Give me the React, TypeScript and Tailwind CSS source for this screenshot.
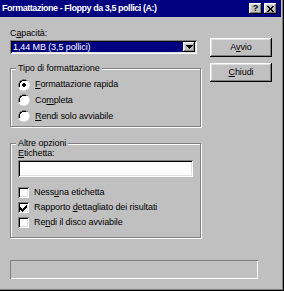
import React from "react";

const raised =
  "shadow-[inset_-1px_-1px_0_#000,inset_1px_1px_0_#fff,inset_-2px_-2px_0_#808080,inset_2px_2px_0_#dfdfdf]";
const sunken =
  "shadow-[inset_1px_1px_0_#808080,inset_-1px_-1px_0_#fff,inset_2px_2px_0_#000,inset_-2px_-2px_0_#dfdfdf]";
const etched = "border border-[#808080] shadow-[inset_1px_1px_0_#fff,1px_1px_0_#fff]";

function U({ children }: { children: React.ReactNode }) {
  return <span className="underline underline-offset-[1px]">{children}</span>;
}

function Radio({ checked }: { checked?: boolean }) {
  return (
    <svg width="12" height="12" viewBox="0 0 12 12" className="shrink-0">
      <path d="M4 0h4v1h2v1h1v2h1v4h-1v2h-1v1h-2v1h-4v-1h-2v-1h-1v-2h-1v-4h1v-2h1v-1h2z" fill="#fff" />
      <path d="M4 0h4v1h2v1h-2v-1h-4v1h-2v2h-1v4h-1v-4h1v-2h1v-1h2z" fill="#808080" />
      <path d="M4 1h4v1h-4v1h-1v1h-1v4h-1v-4h1v-2h2z" fill="#000" />
      <path d="M10 2h1v2h1v4h-1v2h-1v1h-2v1h-4v-1h4v-1h2v-2h1v-4h-1z" fill="#dfdfdf" />
      {checked && <path d="M5 4h2v1h1v2h-1v1h-2v-1h-1v-2h1z" fill="#000" />}
    </svg>
  );
}

function Check({ checked }: { checked?: boolean }) {
  return (
    <div className={`w-[11px] h-[11px] bg-white shrink-0 relative ${sunken}`}>
      {checked && (
        <svg width="11" height="11" viewBox="0 0 11 11" className="absolute left-0 top-0">
          <path d="M2 5h1v1h1v1h1v-1h1v-1h1v-1h1v-1h1v3h-1v1h-1v1h-1v1h-1v1h-1v-1h-1v-1h-1v-1h-1z" fill="#000" />
        </svg>
      )}
    </div>
  );
}

function Row({ control, children }: { control: React.ReactNode; children: React.ReactNode }) {
  return (
    <div className="flex items-center gap-[5px] h-[15px]">
      {control}
      <span>{children}</span>
    </div>
  );
}

function Group({ title, className, children }: { title: string; className: string; children: React.ReactNode }) {
  return (
    <div className={`relative ${etched} ${className}`}>
      <span className="absolute left-[5px] top-[-7px] px-[2px] bg-[#c0c0c0] leading-[12px]">{title}</span>
      {children}
    </div>
  );
}

export default function App() {
  return (
    <div
      className="w-[284px] h-[291px] bg-[#c0c0c0] text-black text-[9px] leading-[11px] tracking-[-0.1px] shadow-[inset_-1px_-1px_0_#000,inset_-2px_-2px_0_#808080] flex flex-col"
      style={{ fontFamily: '"Liberation Sans", Arial, sans-serif' }}
    >
      {/* Title bar */}
      <div className="h-[17px] mr-[3px] bg-[#000080] flex items-center pl-[2px] pr-[4px]">
        <span className="text-white font-bold text-[9px] tracking-[-0.45px] flex-1 whitespace-nowrap">
          Formattazione - Floppy da 3,5 pollici (A:)
        </span>
        <div className="flex gap-[2px]">
          <div className={`w-[13px] h-[11px] bg-[#c0c0c0] ${raised} flex items-center justify-center font-bold text-[9px] text-black`}>?</div>
          <div className={`w-[13px] h-[11px] bg-[#c0c0c0] ${raised} flex items-center justify-center`}>
            <svg width="7" height="6" viewBox="0 0 7 6">
              <path d="M0 0h2v1h1v1h1v-1h1v-1h2v1h-1v1h-1v2h1v1h1v1h-2v-1h-1v-1h-1v1h-1v1h-2v-1h1v-1h1v-2h-1v-1h-1z" fill="#000" />
            </svg>
          </div>
        </div>
      </div>

      <div className="flex pl-[10px] pt-[11px] gap-[9px]">
        {/* Left column */}
        <div className="w-[191px] flex flex-col">
          <div className="h-[12px]">
            C<U>a</U>pacità:
          </div>
          <div className={`w-[187px] h-[14px] bg-white ${sunken} flex items-center p-[2px]`}>
            <div className="flex-1 h-full bg-[#000080] text-white pl-[1px] flex items-center">1,44 MB (3,5 pollici)</div>
            <div className={`w-[12px] h-full bg-[#c0c0c0] ${raised} flex items-center justify-center`}>
              <svg width="7" height="4" viewBox="0 0 7 4">
                <path d="M0 0h7v1h-1v1h-1v1h-1v1h-1v-1h-1v-1h-1v-1h-1z" fill="#000" />
              </svg>
            </div>
          </div>

          <Group title="Tipo di formattazione" className="mt-[14px] h-[59px] px-[7px] pt-[8px]">
            <Row control={<Radio checked />}>
              <U>F</U>ormattazione rapida
            </Row>
            <div className="h-[0.5px]" />
            <Row control={<Radio />}>
              Co<U>m</U>pleta
            </Row>
            <div className="h-[1px]" />
            <Row control={<Radio />}>
              <U>R</U>endi solo avviabile
            </Row>
          </Group>

          <Group title="Altre opzioni" className="mt-[16px] h-[95px] px-[7px] pt-[4px]">
            <div className="h-[12px]">
              <U>E</U>tichetta:
            </div>
            <div className={`w-[175px] h-[17px] bg-white ${sunken}`} />
            <div className="h-[8px]" />
            <Row control={<Check />}>
              Ness<U>u</U>na etichetta
            </Row>
            <Row control={<Check checked />}>
              Rapporto <U>d</U>ettagliato dei risultati
            </Row>
            <Row control={<Check />}>
              Re<U>n</U>di il disco avviabile
            </Row>
          </Group>
        </div>

        {/* Right column */}
        <div className="flex flex-col gap-[6px] pt-[10px]">
          <button className={`w-[62px] h-[19px] bg-[#c0c0c0] ${raised} text-[9px]`}>
            A<U>v</U>vio
          </button>
          <button className={`w-[62px] h-[19px] bg-[#c0c0c0] ${raised} text-[9px]`}>
            <U>C</U>hiudi
          </button>
        </div>
      </div>

      <div className="ml-[10px] mt-[22px] w-[248px] h-[19px] shadow-[inset_1px_1px_0_#808080,inset_-1px_-1px_0_#fff]" />
    </div>
  );
}
